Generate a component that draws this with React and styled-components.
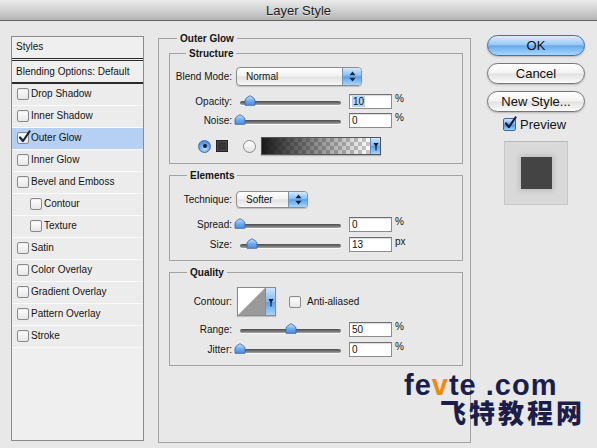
import React from "react";
import styled, { createGlobalStyle } from "styled-components";

const Global = createGlobalStyle`
  html, body { margin: 0; padding: 0; background: #e8e8e8; }
  body { font-family: "Liberation Sans", Arial, sans-serif; }
  * { box-sizing: border-box; }
`;

const Window = styled.div`
  position: relative;
  width: 597px;
  height: 448px;
  overflow: hidden;
  background: #e8e8e8;
  display: flex;
  flex-direction: column;
  font-family: "Liberation Sans", Arial, sans-serif;
  color: #141414;
  font-size: 10px;
`;

const TitleBar = styled.div`
  height: 21px;
  flex: none;
  display: flex;
  align-items: center;
  justify-content: center;
  background: linear-gradient(#ebebeb, #d2d2d2 50%, #b3b3b3);
  border-bottom: 1px solid #666;
  font-size: 13px;
  color: #1d1d1d;
  text-shadow: 0 1px 0 rgba(255, 255, 255, 0.45);
`;

const Body = styled.div`
  display: flex;
  align-items: flex-start;
  padding: 11px 0 0 11px;
`;

/* ---------- left styles list ---------- */
const StylesPanel = styled.div`
  margin-top: 4px;
  width: 133px;
  height: 405px;
  border: 1px solid #8b8b8b;
  background: #efefef;
  display: flex;
  flex-direction: column;
`;

const PanelTitle = styled.div`
  height: 24px;
  padding-left: 4px;
  line-height: 20px;
  border-bottom: 3px double #2b2b2b;
`;

const BlendingRow = styled.div`
  height: 23px;
  padding-left: 4px;
  line-height: 21px;
  border-bottom: 2px solid #2b2b2b;
`;

const StyleRow = styled.div`
  height: 22px;
  display: flex;
  align-items: center;
  gap: 2px;
  padding: 0 0 2px ${(p) => (p.$indent ? 18 : 5)}px;
  border-bottom: 1px solid #fafafa;
  background: ${(p) => (p.$selected ? "#b5d0f3" : "#ececec")};
`;

const Box = styled.span`
  position: relative;
  flex: none;
  width: 12px;
  height: 12px;
  border: 1px solid #8a8a8a;
  border-radius: 2px;
  background: linear-gradient(#ffffff, #e6e6e6);
  box-shadow: inset 0 1px 1px rgba(0, 0, 0, 0.08);
`;

const CheckMark = styled.svg`
  position: absolute;
  left: 0px;
  top: -3px;
`;

const Check = ({ checked }) => (
  <Box>
    {checked && (
      <CheckMark width="13" height="14" viewBox="0 0 13 14">
        <path d="M2 7.5 L5 11 L11.5 1.5" fill="none" stroke="#14234a" strokeWidth="2.2" strokeLinecap="round" strokeLinejoin="round" />
      </CheckMark>
    )}
  </Box>
);

/* ---------- middle groups ---------- */
const Group = styled.fieldset`
  margin: 0;
  padding: 0;
  min-width: 0;
  border: 1px solid #a2a2a2;
  ${(p) => (p.$outer ? "margin-left: 14px; width: 313px; height: 411px;" : "")}
`;

const Legend = styled.legend`
  margin-left: ${(p) => p.$offset}px;
  padding: 0 3px;
  font-weight: bold;
  font-size: 10px;
  line-height: 13px;
`;

const OuterBody = styled.div`
  display: flex;
  flex-direction: column;
  gap: 5px;
  padding: 2px 7px 0 10px;
`;

const GroupBody = styled.div`
  display: flex;
  flex-direction: column;
  padding: ${(p) => p.$pt}px 0 8px 0;
`;

const Row = styled.div`
  display: grid;
  grid-template-columns: 62px auto;
  column-gap: 4px;
  align-items: center;
  margin-top: ${(p) => p.$mt || 0}px;
  height: ${(p) => p.$h}px;
`;

const Label = styled.span`
  text-align: right;
  white-space: nowrap;
  padding-bottom: 1px;
`;

const Controls = styled.div`
  display: flex;
  align-items: center;
`;

const SelectBox = styled.div`
  width: ${(p) => p.$w}px;
  height: ${(p) => p.$h}px;
  display: flex;
  align-items: stretch;
  border: 1px solid #8d8d8d;
  border-radius: 4px;
  background: linear-gradient(#ffffff, #f1f1f1 48%, #e2e2e2 52%, #f6f6f6);
  box-shadow: 0 1px 1px rgba(0, 0, 0, 0.18);
  overflow: hidden;
`;

const SelectText = styled.span`
  flex: 1;
  padding-left: 9px;
  display: flex;
  align-items: center;
`;

const Stepper = styled.span`
  width: ${(p) => p.$w || 19}px;
  display: flex;
  align-items: center;
  justify-content: center;
  border-left: 1px solid #7592b8;
  background: linear-gradient(#d6e9fc, #86bdf3 45%, #5a9fe9 52%, #a9d6fb);
`;

const UpDown = () => (
  <svg width="7" height="11" viewBox="0 0 7 11">
    <path d="M3.5 0.5 L6.5 4.3 L0.5 4.3 Z M3.5 10.5 L6.5 6.7 L0.5 6.7 Z" fill="#15223f" />
  </svg>
);

const DownArrow = () => (
  <svg width="6" height="10" viewBox="0 0 6 10">
    <path d="M0.5 2 L5.5 2 L3 6.5 Z M2.4 5 L3.6 5 L3.6 9.5 L2.4 9.5 Z" fill="#0f1a33" />
  </svg>
);

const Select = ({ value, w, h }) => (
  <SelectBox $w={w} $h={h}>
    <SelectText>{value}</SelectText>
    <Stepper>
      <UpDown />
    </Stepper>
  </SelectBox>
);

const SliderArea = styled.div`
  position: relative;
  width: 109px;
  height: 15px;
  display: flex;
  align-items: center;
`;

const Track = styled.div`
  margin: 3px 4px 0 4px;
  flex: 1;
  height: 4px;
  border-radius: 2px;
  background: linear-gradient(#4b4b4b, #7a7a7a 60%, #a8a8a8);
  box-shadow: 0 1px 0 rgba(255, 255, 255, 0.7);
`;

const Thumb = styled.svg`
  position: absolute;
  top: 1px;
`;

const ThumbIcon = ({ left }) => (
  <Thumb width="12" height="11" viewBox="0 0 12 11" style={{ left }}>
    <defs>
      <linearGradient id="tg" x1="0" y1="0" x2="0" y2="1">
        <stop offset="0" stopColor="#d4e8fd" />
        <stop offset="0.55" stopColor="#6aa9ec" />
        <stop offset="1" stopColor="#4a8ee0" />
      </linearGradient>
    </defs>
    <path d="M1 10.3 L1 5.5 Q1 3.8 3 2.6 L6 0.7 L9 2.6 Q11 3.8 11 5.5 L11 10.3 Z" fill="url(#tg)" stroke="#3d6aa6" strokeWidth="0.9" />
  </Thumb>
);

const TRACK_W = 101;

const Slider = ({ frac }) => (
  <SliderArea>
    <Track />
    <ThumbIcon left={4 + frac * TRACK_W - 6} />
  </SliderArea>
);

const NumInput = styled.div`
  margin-left: 4px;
  width: 43px;
  height: 15px;
  border: 1px solid #8c8c8c;
  border-top-color: #6f6f6f;
  background: #fff;
  box-shadow: inset 0 1px 1px rgba(0, 0, 0, 0.15);
  padding-left: 2px;
  display: flex;
  align-items: center;
  font-size: 10px;
`;

const Highlight = styled.span`
  background: #b4d3f6;
  padding: 0 1px;
`;

const Unit = styled.span`
  margin-left: 3px;
  align-self: flex-start;
  line-height: 9px;
  font-size: 10px;
`;

const SliderRow = ({ label, frac, value, unit, mt, selected }) => (
  <Row $mt={mt} $h={15}>
    <Label>{label}</Label>
    <Controls>
      <Slider frac={frac} />
      <NumInput>{selected ? <Highlight>{value}</Highlight> : value}</NumInput>
      <Unit>{unit}</Unit>
    </Controls>
  </Row>
);

const ColorRow = styled.div`
  margin: 9px 0 0 28px;
  height: 18px;
  display: flex;
  align-items: center;
`;

const Radio = styled.span`
  width: 13px;
  height: 13px;
  border-radius: 50%;
  flex: none;
  display: flex;
  align-items: center;
  justify-content: center;
  border: 1px solid ${(p) => (p.$on ? "#3f6ea8" : "#8a8a8a")};
  background: ${(p) =>
    p.$on
      ? "radial-gradient(circle at 50% 70%, #bfe0fd, #5b9de8 60%, #3e7fd2)"
      : "linear-gradient(#ffffff, #e3e3e3)"};
  &::after {
    content: "";
    display: ${(p) => (p.$on ? "block" : "none")};
    width: 4px;
    height: 4px;
    border-radius: 50%;
    background: #0f1c3a;
  }
`;

const Swatch = styled.span`
  margin: 0 15px 0 5px;
  width: 12px;
  height: 12px;
  background: #353535;
  border: 1px solid #222;
  box-shadow: inset 0 0 0 1px #4a4a4a;
`;

const GradientBar = styled.div`
  margin-left: 5px;
  width: 120px;
  height: 18px;
  display: flex;
  border: 1px solid #555;
  box-shadow: 0 1px 1px rgba(0, 0, 0, 0.2);
`;

const GradientFill = styled.span`
  flex: 1;
  background:
    linear-gradient(to right, rgba(25, 25, 25, 1), rgba(25, 25, 25, 0)),
    conic-gradient(#c9c9c9 25%, #ffffff 0 50%, #c9c9c9 0 75%, #ffffff 0) 0 0 / 8px 8px;
`;

const SmallStepper = styled.span`
  width: 10px;
  display: flex;
  align-items: center;
  justify-content: center;
  border-left: 1px solid #6f8db5;
  background: linear-gradient(#cfe5fc, #7fb7f1 50%, #5d9fe8 52%, #a6d3fa);
`;

const ContourRow = styled.div`
  display: grid;
  grid-template-columns: 62px auto;
  column-gap: 4px;
  align-items: center;
  height: 29px;
`;

const ContourBox = styled.div`
  margin-left: 1px;
  width: 39px;
  height: 29px;
  display: flex;
  border: 1px solid #8a8a8a;
  background: #fff;
  box-shadow: 0 1px 1px rgba(0, 0, 0, 0.18);
`;

const ContourCurve = styled.svg`
  flex: 1;
  display: block;
`;

const AntiAlias = styled.label`
  margin-left: 13px;
  display: flex;
  align-items: center;
  gap: 6px;
`;

/* ---------- right column ---------- */
const RightCol = styled.div`
  margin: 3px 0 0 16px;
  width: 98px;
  display: flex;
  flex-direction: column;
  gap: 7px;
`;

const Button = styled.div`
  height: 21px;
  border-radius: 11px;
  display: flex;
  align-items: center;
  justify-content: center;
  font-size: 13px;
  color: #111;
  border: 1px solid ${(p) => (p.$primary ? "#46709f" : "#767676")};
  background: ${(p) =>
    p.$primary
      ? "linear-gradient(#dcecfd, #9cc9f5 45%, #68a9ee 52%, #a7d8fc)"
      : "linear-gradient(#ffffff, #f3f3f3 48%, #e1e1e1 52%, #fbfbfb)"};
  box-shadow: 0 1px 2px rgba(0, 0, 0, 0.22);
`;

const PreviewRow = styled.div`
  margin: -1px 0 0 16px;
  height: 13px;
  display: flex;
  align-items: center;
  gap: 4px;
  font-size: 13px;
`;

const BlueBox = styled.span`
  position: relative;
  width: 13px;
  height: 13px;
  flex: none;
  border: 1px solid #40689c;
  border-radius: 2px;
  background: linear-gradient(#cfe5fc, #6ea9ec 50%, #4b90e2 52%, #9fd2fa);
`;

const PreviewBox = styled.div`
  margin: 3px 0 0 17px;
  width: 64px;
  height: 64px;
  display: flex;
  align-items: center;
  justify-content: center;
  background: #d9d9d9;
  border: 1px solid #c6c6c6;
  border-top-color: #bbbbbb;
`;

const PreviewSquare = styled.div`
  width: 31px;
  height: 32px;
  background: #444;
  box-shadow: 0 0 5px 2px rgba(0, 0, 0, 0.12);
`;

/* ---------- watermark ---------- */
const Watermark = styled.div`
  position: absolute;
  left: 404px;
  top: 372px;
  color: #1b1e4a;
  pointer-events: none;
`;

const MarkLatin = styled.div`
  font-family: "Liberation Sans", Arial, sans-serif;
  font-weight: bold;
  font-size: 29px;
  line-height: 27px;
  letter-spacing: 1px;
  white-space: nowrap;
`;

const Orange = styled.span`
  color: #f08a0c;
`;

const MarkCJK = styled.div`
  margin-left: 36px;
  font-family: "Noto Sans CJK SC", "Noto Sans CJK JP", sans-serif;
  font-weight: 900;
  font-size: 26px;
  line-height: 26px;
  letter-spacing: 3px;
  white-space: nowrap;
`;

const styleItems = [
  { name: "Drop Shadow" },
  { name: "Inner Shadow" },
  { name: "Outer Glow", checked: true, selected: true },
  { name: "Inner Glow" },
  { name: "Bevel and Emboss" },
  { name: "Contour", indent: true },
  { name: "Texture", indent: true },
  { name: "Satin" },
  { name: "Color Overlay" },
  { name: "Gradient Overlay" },
  { name: "Pattern Overlay" },
  { name: "Stroke" },
];

export default function App() {
  return (
    <>
      <Global />
      <Window>
        <TitleBar>Layer Style</TitleBar>
        <Body>
          <StylesPanel>
            <PanelTitle>Styles</PanelTitle>
            <BlendingRow>Blending Options: Default</BlendingRow>
            {styleItems.map((it) => (
              <StyleRow key={it.name} $indent={it.indent} $selected={it.selected}>
                <Check checked={it.checked} />
                <span>{it.name}</span>
              </StyleRow>
            ))}
          </StylesPanel>

          <Group $outer>
            <Legend $offset={18}>Outer Glow</Legend>
            <OuterBody>
              <Group>
                <Legend $offset={16}>Structure</Legend>
                <GroupBody $pt={7}>
                  <Row $h={19}>
                    <Label>Blend Mode:</Label>
                    <Select value="Normal" w={126} h={19} />
                  </Row>
                  <SliderRow label="Opacity:" frac={0.1} value="10" unit="%" mt={8} selected />
                  <SliderRow label="Noise:" frac={0} value="0" unit="%" mt={4} />
                  <ColorRow>
                    <Radio $on />
                    <Swatch />
                    <Radio />
                    <GradientBar>
                      <GradientFill />
                      <SmallStepper>
                        <DownArrow />
                      </SmallStepper>
                    </GradientBar>
                  </ColorRow>
                </GroupBody>
              </Group>

              <Group>
                <Legend $offset={17}>Elements</Legend>
                <GroupBody $pt={9}>
                  <Row $h={17}>
                    <Label>Technique:</Label>
                    <Select value="Softer" w={72} h={17} />
                  </Row>
                  <SliderRow label="Spread:" frac={0} value="0" unit="%" mt={9} />
                  <SliderRow label="Size:" frac={0.12} value="13" unit="px" mt={5} />
                </GroupBody>
              </Group>

              <Group>
                <Legend $offset={17}>Quality</Legend>
                <GroupBody $pt={8}>
                  <ContourRow>
                    <Label>Contour:</Label>
                    <Controls>
                      <ContourBox>
                        <ContourCurve viewBox="0 0 28 27" preserveAspectRatio="none">
                          <polygon points="0,27 28,0 28,27" fill="#9a9a9a" />
                        </ContourCurve>
                        <SmallStepper>
                          <DownArrow />
                        </SmallStepper>
                      </ContourBox>
                      <AntiAlias>
                        <Check />
                        <span>Anti-aliased</span>
                      </AntiAlias>
                    </Controls>
                  </ContourRow>
                  <SliderRow label="Range:" frac={0.5} value="50" unit="%" mt={6} />
                  <SliderRow label="Jitter:" frac={0} value="0" unit="%" mt={5} />
                </GroupBody>
              </Group>
            </OuterBody>
          </Group>

          <RightCol>
            <Button $primary>OK</Button>
            <Button>Cancel</Button>
            <Button>New Style...</Button>
            <PreviewRow>
              <BlueBox>
                <CheckMark width="13" height="14" viewBox="0 0 13 14">
                  <path d="M2 7.5 L5 11 L11.5 1.5" fill="none" stroke="#0f1c3c" strokeWidth="2.2" strokeLinecap="round" strokeLinejoin="round" />
                </CheckMark>
              </BlueBox>
              <span>Preview</span>
            </PreviewRow>
            <PreviewBox>
              <PreviewSquare />
            </PreviewBox>
          </RightCol>
        </Body>

        <Watermark>
          <MarkLatin>
            fe<Orange>v</Orange>te .com
          </MarkLatin>
          <MarkCJK>飞特教程网</MarkCJK>
        </Watermark>
      </Window>
    </>
  );
}
